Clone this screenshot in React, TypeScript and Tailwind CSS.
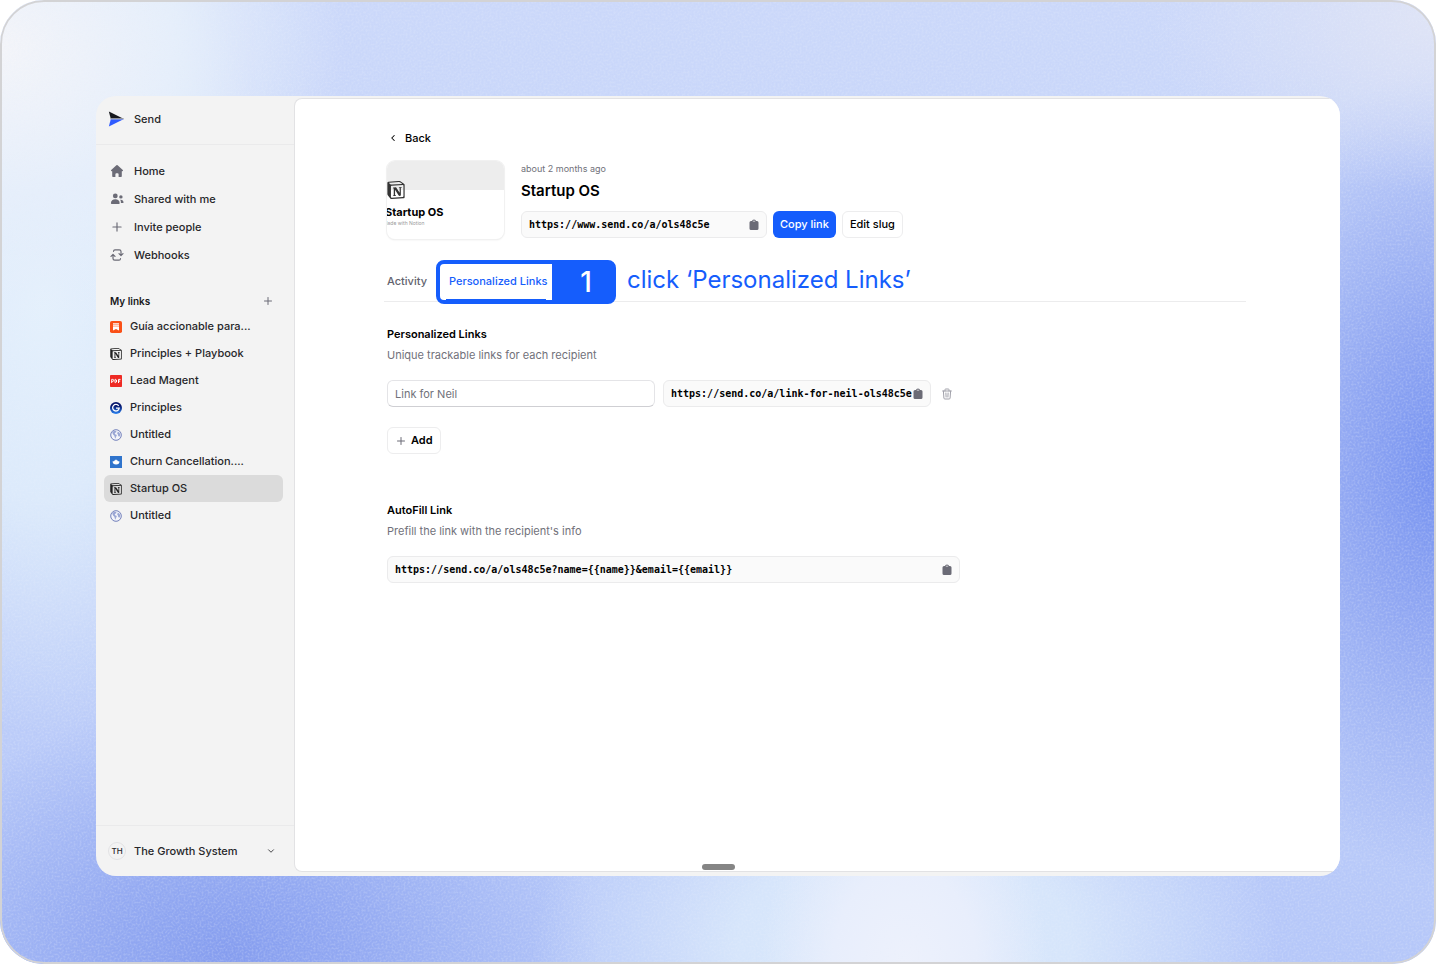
import type { ReactNode } from "react";
import { SiNotion } from "react-icons/si";
import { ChevronDown, ChevronLeft, Plus } from "lucide-react";

function SendLogo() {
  return (
    <svg viewBox="0 0 16 16" className="h-4 w-4" aria-hidden="true">
      <path d="M0.9 0.4 16 8H2.8Z" fill="#15171c" />
      <path d="M2.8 8H16L0.9 15.5Z" fill="#2f5bff" />
      <path d="M2.6 7.3h12L16 8l-1.4.6H2.5Z" fill="#b9bcc6" />
    </svg>
  );
}

function HomeIcon() {
  return (
    <svg viewBox="0 0 14 14" className="h-3.5 w-3.5" fill="currentColor" aria-hidden="true">
      <path d="M6.4 1.2a.9.9 0 0 1 1.2 0l5.2 4.9c.5.5.2 1.2-.5 1.2h-.5v4.9a.8.8 0 0 1-.8.8H8.6V10.2a1 1 0 0 0-1-1H6.4a1 1 0 0 0-1 1V13H3a.8.8 0 0 1-.8-.8V7.3h-.5c-.7 0-1-.7-.5-1.2Z" />
    </svg>
  );
}

function PeopleIcon() {
  return (
    <svg viewBox="0 0 14 14" className="h-3.5 w-3.5" fill="currentColor" aria-hidden="true">
      <circle cx="5.3" cy="3.9" r="2.4" />
      <path d="M0.9 11.3c0-2.500 1.900-4 4.400-4s4.400 1.500 4.400 4c0 .5-.3.8-.8.8H1.700c-.5 0-.8-.3-.8-.8Z" />
      <circle cx="10.9" cy="4.9" r="1.7" />
      <path d="M10.2 7.8c1.900-.3 3.300.9 3.300 2.600 0 .4-.2.600-.6.600h-2c.1-1.300-.1-2.300-.7-3.200Z" />
    </svg>
  );
}

function WebhookIcon() {
  return (
    <svg
      viewBox="0 0 14 14"
      className="h-3.5 w-3.5"
      fill="none"
      stroke="currentColor"
      strokeWidth="1.2"
      strokeLinecap="round"
      strokeLinejoin="round"
      aria-hidden="true"
    >
      <path d="M3.5 3.300A1.600 1.600 0 0 1 5 1.900h4.300A1.700 1.700 0 0 1 11 3.600v3.700M9 5.600l2 1.900 2-1.900" />
      <path d="M10.5 10.700A1.600 1.600 0 0 1 9 12.100H4.700A1.700 1.700 0 0 1 3 10.400V6.700M1 8.400l2-1.900 2 1.900" />
    </svg>
  );
}

function ClipboardIcon() {
  return (
    <svg viewBox="0 0 12 12" className="h-3 w-3" aria-hidden="true">
      <path
        d="M4 2A2 1.500 0 0 1 8 2h1a1.500 1.500 0 0 1 1.500 1.500v6A1.500 1.500 0 0 1 9 11H3a1.500 1.500 0 0 1-1.500-1.500v-6A1.500 1.500 0 0 1 3 2Z"
        fill="#6b6b76"
      />
      <path d="M5.2 2.200h1.600" stroke="#fafafa" strokeWidth="0.7" strokeLinecap="round" />
    </svg>
  );
}

function TrashIcon() {
  return (
    <svg viewBox="0 0 12 12" className="h-3 w-3" fill="none" stroke="#a1a1aa" strokeWidth="1" aria-hidden="true">
      <path
        d="M1.7 3h8.600M4 3V1.600a.6.6 0 0 1 .6-.6h2.800a.6.6 0 0 1 .6.6V3M2.400 3l.5 7.100a1 1 0 0 0 1 .9h4.200a1 1 0 0 0 1-.9L9.600 3M4.900 5l.2 4M7.100 5l-.2 4"
        strokeLinecap="round"
      />
    </svg>
  );
}

function BookmarkIcon() {
  return (
    <svg viewBox="0 0 12 12" className="h-3 w-3" aria-hidden="true">
      <rect width="12" height="12" rx="1.8" fill="#fa5017" />
      <path d="M3 2.200h6v7.400L6 8 3 9.600Z" fill="#fff" />
      <path d="M3 3.600h6M3 5.200h6" stroke="#fa5017" strokeWidth="0.5" />
    </svg>
  );
}

function PdfIcon() {
  return (
    <svg viewBox="0 0 12 12" className="h-3 w-3" aria-hidden="true">
      <rect width="12" height="12" rx="0.8" fill="#ee2a24" />
      <g fill="none" stroke="#fff" strokeWidth="1">
        <path d="M1.7 8V4.400h1a1 1 0 0 1 0 2h-1M5 4.400v3.200h.5c1.500 0 1.500-3.200 0-3.200ZM8.500 8V4.400h2M8.500 6.100h1.700" />
      </g>
    </svg>
  );
}

function GrowthIcon() {
  return (
    <svg viewBox="0 0 12 12" className="h-3 w-3" aria-hidden="true">
      <defs>
        <linearGradient id="growth" x1="0" y1="0" x2="0" y2="1">
          <stop offset="0.3" stopColor="#06156b" />
          <stop offset="1" stopColor="#2c86f5" />
        </linearGradient>
      </defs>
      <circle cx="6" cy="6" r="6" fill="url(#growth)" />
      <path d="M8.7 3.900A3.300 3.300 0 1 0 9.200 6.200H6" fill="none" stroke="#fff" strokeWidth="1.3" />
    </svg>
  );
}

function GlobeIcon() {
  return (
    <svg viewBox="0 0 12 12" className="h-3 w-3" aria-hidden="true">
      <circle cx="6" cy="6" r="5.3" fill="#f3f4f9" stroke="#7380bb" strokeWidth="1" />
      <path d="M2.2 3.400 4 1.800l2.400.2-.2 1.300-1.400.8.2 1.100 1.500.5.3 1.200-1 .9.1 1.900-1.100-1.100-.4-1.900-1.300-1.100Z" fill="#9aa6d4" />
      <path d="M7.8 2.600 9.600 3.800l.7 2.300-.9 1.600-1.200-.8-.2-1.500-.8-.7Z" fill="#9aa6d4" />
    </svg>
  );
}

function WhaleIcon() {
  return (
    <svg viewBox="0 0 12 12" className="h-3 w-3" aria-hidden="true">
      <rect width="12" height="12" fill="#2f74cc" />
      <path d="M2.6 5.300h1.600V4.600h1V3.700h1.600v.9h1v.7h1.600c.3 2.100-1.100 3.300-3.300 3.300S2.600 7.400 2.600 5.300Z" fill="#fff" />
    </svg>
  );
}

function NotionIcon() {
  return <SiNotion className="h-3 w-3 text-[#222]" aria-hidden="true" />;
}

const navItems: { label: string; icon: ReactNode }[] = [
  { label: "Home", icon: <HomeIcon /> },
  { label: "Shared with me", icon: <PeopleIcon /> },
  { label: "Invite people", icon: <Plus className="h-3.5 w-3.5" strokeWidth={2} /> },
  { label: "Webhooks", icon: <WebhookIcon /> },
];

const linkItems: { label: string; icon: ReactNode; active?: boolean }[] = [
  { label: "Guía accionable para...", icon: <BookmarkIcon /> },
  { label: "Principles + Playbook", icon: <NotionIcon /> },
  { label: "Lead Magent", icon: <PdfIcon /> },
  { label: "Principles", icon: <GrowthIcon /> },
  { label: "Untitled", icon: <GlobeIcon /> },
  { label: "Churn Cancellation....", icon: <WhaleIcon /> },
  { label: "Startup OS", icon: <NotionIcon />, active: true },
  { label: "Untitled", icon: <GlobeIcon /> },
];

function Sidebar() {
  return (
    <aside className="flex w-[198px] shrink-0 flex-col text-[11px] font-medium text-[#27272a]">
      <div className="flex h-[49px] items-center gap-2 border-b border-[#eaeaeb] px-3 pb-0.5">
        <SendLogo />
        <span className="pl-0.5">Send</span>
      </div>
      <nav aria-label="Main" className="flex flex-col px-2 pt-3">
        {navItems.map((item) => (
          <a key={item.label} href="#" className="flex h-7 items-center gap-2 px-1.5">
            <span className="flex w-3.5 justify-center text-[#6b6b76]">{item.icon}</span>
            <span className="pl-0.5">{item.label}</span>
          </a>
        ))}
      </nav>
      <div className="mt-5 flex h-6 items-center justify-between pr-5 pl-3.5 text-[#18181b]">
        <h2 className="text-[10px] font-semibold">My links</h2>
        <button type="button" aria-label="New link" className="text-[#6b6b76]">
          <Plus className="h-3 w-3" strokeWidth={2} />
        </button>
      </div>
      <nav aria-label="My links" className="flex flex-col pr-[11px] pl-2">
        {linkItems.map((item, i) => (
          <a
            key={i}
            href="#"
            className={
              item.active
                ? "flex h-[27px] items-center gap-2 rounded-md bg-[#dbdbdb] px-1.5"
                : "flex h-[27px] items-center gap-2 rounded-md px-1.5"
            }
          >
            {item.icon}
            <span>{item.label}</span>
          </a>
        ))}
      </nav>
      <button type="button" className="mt-auto flex h-[51px] items-center gap-2 border-t border-[#eaeaeb] pr-[18px] pl-3 text-left">
        <span className="flex h-[18px] w-[18px] items-center justify-center rounded-full border border-[#e2e2e4] text-[8px]">TH</span>
        <span className="grow">The Growth System</span>
        <ChevronDown className="h-2.5 w-2.5" strokeWidth={2} aria-hidden="true" />
      </button>
    </aside>
  );
}

function UrlBox({ url, width }: { url: string; width: string }) {
  return (
    <div className={`flex h-[27px] items-center justify-between rounded-md border border-[#ebebec] bg-[#fafafa] pr-1.5 pl-[7px] ${width}`}>
      <code className="font-['DejaVu_Sans_Mono',monospace] text-[10px] font-bold whitespace-nowrap text-black">{url}</code>
      <button type="button" aria-label="Copy to clipboard">
        <ClipboardIcon />
      </button>
    </div>
  );
}

function Thumbnail() {
  return (
    <div className="relative h-[78px] w-[117px] shrink-0 overflow-hidden rounded-lg bg-white shadow-[0_0_0_1px_#f1f1f1,0_1px_2px_#0000001a]">
      <div className="h-[29px] bg-[#ededed]" />
      <SiNotion className="absolute top-5 left-0 h-[18px] w-[18px] text-[#333]" aria-hidden="true" />
      <p className="-ml-0.5 pt-3.5 text-[11px] leading-4 font-bold text-black">Startup OS</p>
      <p className="-ml-1 text-[5px] leading-[7px] text-[#999]">Made with Notion</p>
    </div>
  );
}

function Tabs() {
  return (
    <div role="tablist" className="-ml-[3px] flex h-10 items-center border-b border-[#ececed] pl-[3px] text-[11px] font-medium">
      <button type="button" role="tab" aria-selected="false" className="text-[#63636e]">
        Activity
      </button>
      <div className="relative ml-[22px] flex h-full items-center">
        <button type="button" role="tab" aria-selected="true" className="h-full text-[#155dfc]">
          Personalized Links
        </button>
        <div className="pointer-events-none absolute -top-0.5 -left-[13px] flex h-11 w-[180px] justify-end rounded-lg border-4 border-[#155dfc]">
          <span className="absolute bottom-0 left-1.5 h-px w-[100px] bg-[#155dfc]" />
          <span className="flex w-[60px] items-center justify-center bg-[#155dfc] pl-2 text-[28px] leading-9 font-medium text-white">1</span>
        </div>
        <p className="pointer-events-none absolute -top-0.5 left-[178px] text-2xl leading-10 font-normal whitespace-nowrap text-[#155dfc]">
          click ‘Personalized Links’
        </p>
      </div>
    </div>
  );
}

function Section({ title, text, children }: { title: string; text: string; children: ReactNode }) {
  return (
    <section>
      <h2 className="text-[11px] leading-4 font-semibold text-black">{title}</h2>
      <p className="mt-[5px] text-[11px] leading-4 text-[#71717a]">{text}</p>
      <div className="mt-[17px]">{children}</div>
    </section>
  );
}

function Backdrop() {
  return (
    <>
      <div className="absolute inset-0 bg-[radial-gradient(ellipse_24%_30%_at_0%_5%,#f4f5f9_0%,#e6effb_50%,#e6effb00_100%),radial-gradient(ellipse_17%_44%_at_3%_32%,#e4f0fc_0%,#dceafb_45%,#dceafb00_100%),radial-gradient(ellipse_20%_18%_at_100%_2%,#dfe4f6_0%,#dfe4f600_100%),radial-gradient(ellipse_10%_20%_at_63%_100%,#edf1fc_0%,#e8eefc_50%,#e8eefc00_100%),radial-gradient(ellipse_26%_24%_at_63%_98%,#d8e8fb_0%,#d6e5fb_45%,#d6e5fb00_100%),radial-gradient(ellipse_26%_26%_at_16%_99%,#859def_0%,#94aaf2_35%,#94aaf200_100%),radial-gradient(ellipse_19%_42%_at_101%_49%,#7390f0_0%,#8ea5f2_35%,#8ea5f200_100%),linear-gradient(180deg,#cbd8fa_0%,#c1d0f9_50%,#b5c7f9_100%)]" />
      <svg className="absolute inset-0 h-full w-full opacity-20" aria-hidden="true">
        <filter id="grain" x="0" y="0" width="100%" height="100%">
          <feTurbulence type="fractalNoise" baseFrequency="0.5" numOctaves="2" />
          <feColorMatrix type="matrix" values="0 0 0 0 0.82  0 0 0 0 0.87  0 0 0 0 0.97  3 0 0 0 -1.2" />
        </filter>
        <rect width="100%" height="100%" filter="url(#grain)" />
      </svg>
    </>
  );
}

export default function App() {
  return (
    <div className="relative flex min-h-screen overflow-hidden rounded-[44px] px-24 pt-24 pb-[88px] font-[Inter,sans-serif]">
      <Backdrop />
      <div className="pointer-events-none absolute inset-0 rounded-[44px] border-2 border-[#d3d3d5]" />
      <div className="relative flex grow overflow-hidden rounded-[20px] bg-[#f3f3f3]">
        <Sidebar />
        <main className="relative mt-0.5 mb-1 grow rounded-l-lg border border-r-0 border-[#e2e2e4] bg-white pr-[94px] pb-10 pl-[92px]">
          <a href="#" className="mt-[31px] flex items-center gap-[7px] text-[11px] leading-4 font-medium text-black">
            <ChevronLeft className="ml-px h-2.5 w-2.5" strokeWidth={2.5} aria-hidden="true" />
            Back
          </a>
          <div className="mt-[15px] flex gap-[17px] pb-[23px]">
            <Thumbnail />
            <div>
              <p className="text-[9px] leading-4 text-[#71717a]">about 2 months ago</p>
              <h1 className="mt-1 text-[15px] leading-5 font-semibold text-black">Startup OS</h1>
              <div className="mt-2.5 flex gap-1.5 text-[11px] font-medium">
                <UrlBox url="https://www.send.co/a/ols48c5e" width="w-[246px]" />
                <button type="button" className="h-[27px] rounded-md bg-[#155dfc] px-[7px] text-white">
                  Copy link
                </button>
                <button type="button" className="h-[27px] rounded-md border border-[#ededee] bg-white px-[7px] text-black">
                  Edit slug
                </button>
              </div>
            </div>
          </div>
          <Tabs />
          <div className="mt-6">
            <Section title="Personalized Links" text="Unique trackable links for each recipient">
              <div className="flex items-center gap-2">
                <input
                  aria-label="Link name"
                  placeholder="Link for Neil"
                  className="h-[27px] w-[268px] rounded-md border border-[#e4e4e7] border-b-[#cfcfd3] bg-white px-[7px] text-[11px] text-[#71717a] placeholder:text-[#71717a]"
                />
                <UrlBox url="https://send.co/a/link-for-neil-ols48c5e" width="w-[268px]" />
                <button type="button" aria-label="Delete link" className="ml-0.5">
                  <TrashIcon />
                </button>
              </div>
              <button
                type="button"
                className="mt-5 flex h-[27px] items-center gap-1 rounded-md border border-[#ededee] bg-white px-[7px] text-[11px] font-semibold text-black"
              >
                <Plus className="h-3 w-3 text-[#6b6b76]" strokeWidth={2} aria-hidden="true" />
                Add
              </button>
            </Section>
          </div>
          <div className="mt-12">
            <Section title="AutoFill Link" text="Prefill the link with the recipient's info">
              <UrlBox url="https://send.co/a/ols48c5e?name={{name}}&email={{email}}" width="w-[573px]" />
            </Section>
          </div>
          <div className="absolute bottom-px left-[407px] h-1.5 w-[33px] rounded-full bg-[#858585]" />
        </main>
      </div>
    </div>
  );
}
